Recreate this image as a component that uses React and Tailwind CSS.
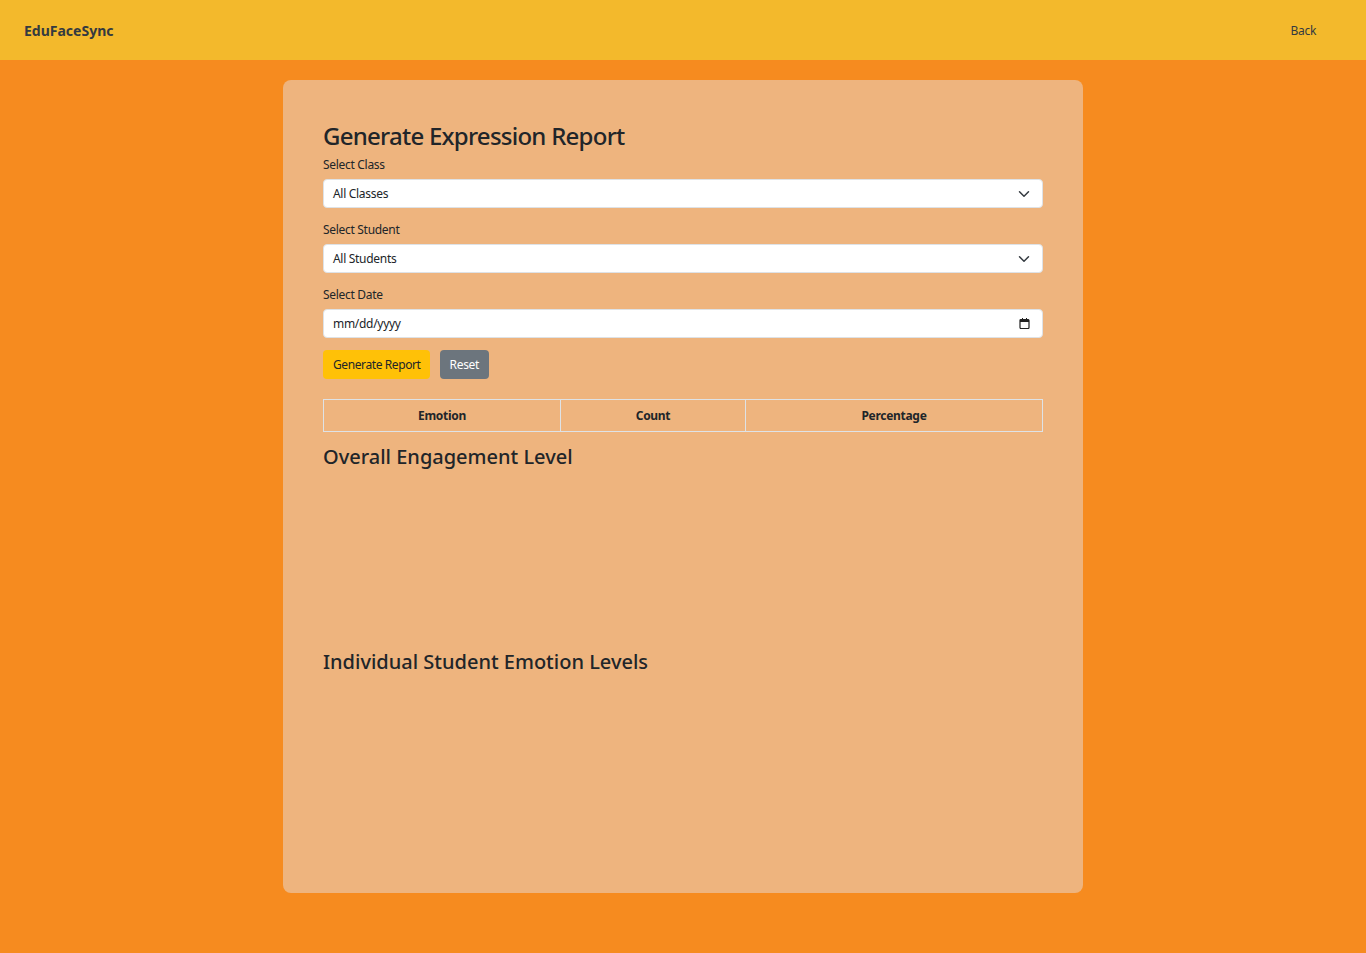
import React from 'react';

const font = { fontFamily: '"Noto Sans", "Open Sans", sans-serif' };

const Chevron = () => (
  <svg className="w-4 h-3" viewBox="0 0 16 16" fill="none" stroke="#343a40" strokeWidth="2" strokeLinecap="round" strokeLinejoin="round">
    <path d="m2 5 6 6 6-6" />
  </svg>
);

const Calendar = () => (
  <svg className="w-[11px] h-[11px]" viewBox="0 0 11 11" fill="none">
    <rect x="1" y="1.5" width="9" height="9" rx="1" stroke="#222" strokeWidth="1.2" />
    <rect x="1" y="1.5" width="9" height="2.5" fill="#222" />
    <rect x="3" y="0" width="1" height="2" fill="#222" />
    <rect x="7" y="0" width="1" height="2" fill="#222" />
  </svg>
);

const SelectBox = ({ value }) => (
  <div className="h-[29px] bg-white rounded-[4px] border border-[#dee2e6] flex items-center justify-between pl-[9px] pr-[10px] text-[12px] tracking-[-0.3px] text-[#212529]">
    <span>{value}</span>
    <Chevron />
  </div>
);

const Field = ({ label, children, first }) => (
  <div className={first ? 'mt-[4px]' : 'mt-[13px]'}>
    <div className="text-[12px] leading-[18px] tracking-[-0.3px] text-[#212529] mb-[5px]">{label}</div>
    {children}
  </div>
);

export default function App() {
  return (
    <div className="min-h-[953px] bg-[#f68b1f]" style={font}>
      <header className="h-[60px] bg-[#f3b92c] flex items-center justify-between pl-[24px] pr-[50px]">
        <div className="text-[14px] font-bold text-[#343a40]">EduFaceSync</div>
        <div className="pt-[2px] text-[12px] tracking-[-0.3px] text-[#343a40]">Back</div>
      </header>

      <div className="flex justify-center pt-[20px]">
        <div className="w-[800px] h-[813px] bg-[#eeb47e] rounded-[8px] px-[40px] pt-[40px]">
          <h2 className="text-[24px] leading-[32px] tracking-[-0.75px] font-medium text-[#212529]">Generate Expression Report</h2>

          <Field label="Select Class" first>
            <SelectBox value="All Classes" />
          </Field>
          <Field label="Select Student">
            <SelectBox value="All Students" />
          </Field>
          <Field label="Select Date">
            <div className="h-[29px] bg-white rounded-[4px] border border-[#dee2e6] flex items-center justify-between pl-[9px] pr-[12px] text-[12px] tracking-[-0.3px] text-[#212529]">
              <span>mm/dd/yyyy</span>
              <Calendar />
            </div>
          </Field>

          <div className="flex gap-[10px] mt-[12px]">
            <button className="h-[29px] pl-[10px] pr-[9px] bg-[#ffc107] rounded-[4px] text-[12px] tracking-[-0.4px] text-[#212529]">Generate Report</button>
            <button className="h-[29px] px-[10px] bg-[#6c757d] rounded-[4px] text-[12px] tracking-[-0.3px] text-white">Reset</button>
          </div>

          <table className="w-full mt-[20px] border-collapse">
            <thead>
              <tr className="h-[32px] text-[12px] tracking-[-0.3px] font-bold text-[#212529]">
                <th className="border border-[#dee2e6] w-[237px]">Emotion</th>
                <th className="border border-[#dee2e6] w-[185px]">Count</th>
                <th className="border border-[#dee2e6]">Percentage</th>
              </tr>
            </thead>
          </table>

          <h3 className="mt-[12px] text-[20px] leading-[26px] font-medium text-[#212529]">Overall Engagement Level</h3>
          <div className="h-[179px]" />
          <h3 className="text-[20px] leading-[26px] font-medium text-[#212529]">Individual Student Emotion Levels</h3>
        </div>
      </div>
    </div>
  );
}
